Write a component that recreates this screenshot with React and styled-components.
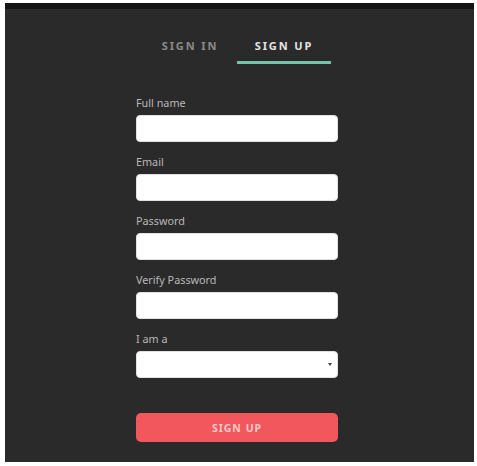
import React from "react";
import styled, { createGlobalStyle } from "styled-components";

const Global = createGlobalStyle`
  html, body { margin: 0; padding: 0; background: #ffffff; }
  body { font-family: "Noto Sans", "DejaVu Sans", sans-serif; }
  * { box-sizing: border-box; }
`;

const Page = styled.div`
  padding: 3px 3px 4px 5px;
  background: #ffffff;
`;

const Panel = styled.div`
  height: 459px;
  background: #2a2a2a;
  border-top: 6px solid #141414;
  padding: 30px 0 0 131px;
`;

const Column = styled.div`
  width: 202px;
  display: flex;
  flex-direction: column;
`;

const Tabs = styled.div`
  display: flex;
  justify-content: center;
  margin-bottom: 32px;
`;

const Tab = styled.div`
  width: 94px;
  text-align: center;
  font-size: 11px;
  line-height: 14px;
  font-weight: 700;
  letter-spacing: 1.9px;
  color: ${(p) => (p.$active ? "#e4e4e4" : "#8a8a8a")};
  padding-bottom: 8px;
  border-bottom: 3px solid ${(p) => (p.$active ? "#76c3ac" : "transparent")};
`;

const Field = styled.div`
  display: flex;
  flex-direction: column;
  gap: 5px;
  margin-bottom: 13px;
`;

const Label = styled.label`
  font-size: 10.8px;
  line-height: 14px;
  color: #b8b8b8;
`;

const Input = styled.div`
  position: relative;
  height: 27px;
  background: #ffffff;
  border: 1px solid #e2e2e2;
  border-radius: 4px;
`;

const Arrow = styled.span`
  position: absolute;
  right: 5px;
  top: 11px;
  width: 0;
  height: 0;
  border-left: 2.5px solid transparent;
  border-right: 2.5px solid transparent;
  border-top: 3px solid #444;
`;

const Button = styled.div`
  margin-top: 22px;
  height: 29px;
  border-radius: 5px;
  background: #f2575d;
  color: #f9c9c9;
  font-size: 10.5px;
  font-weight: 700;
  letter-spacing: 1px;
  display: flex;
  align-items: center;
  justify-content: center;
`;

const fields = ["Full name", "Email", "Password", "Verify Password"];

export default function App() {
  return (
    <>
      <Global />
      <Page>
        <Panel>
          <Column>
            <Tabs>
              <Tab>SIGN IN</Tab>
              <Tab $active>SIGN UP</Tab>
            </Tabs>
            {fields.map((f) => (
              <Field key={f}>
                <Label>{f}</Label>
                <Input />
              </Field>
            ))}
            <Field>
              <Label>I am a</Label>
              <Input>
                <Arrow />
              </Input>
            </Field>
            <Button>SIGN UP</Button>
          </Column>
        </Panel>
      </Page>
    </>
  );
}
